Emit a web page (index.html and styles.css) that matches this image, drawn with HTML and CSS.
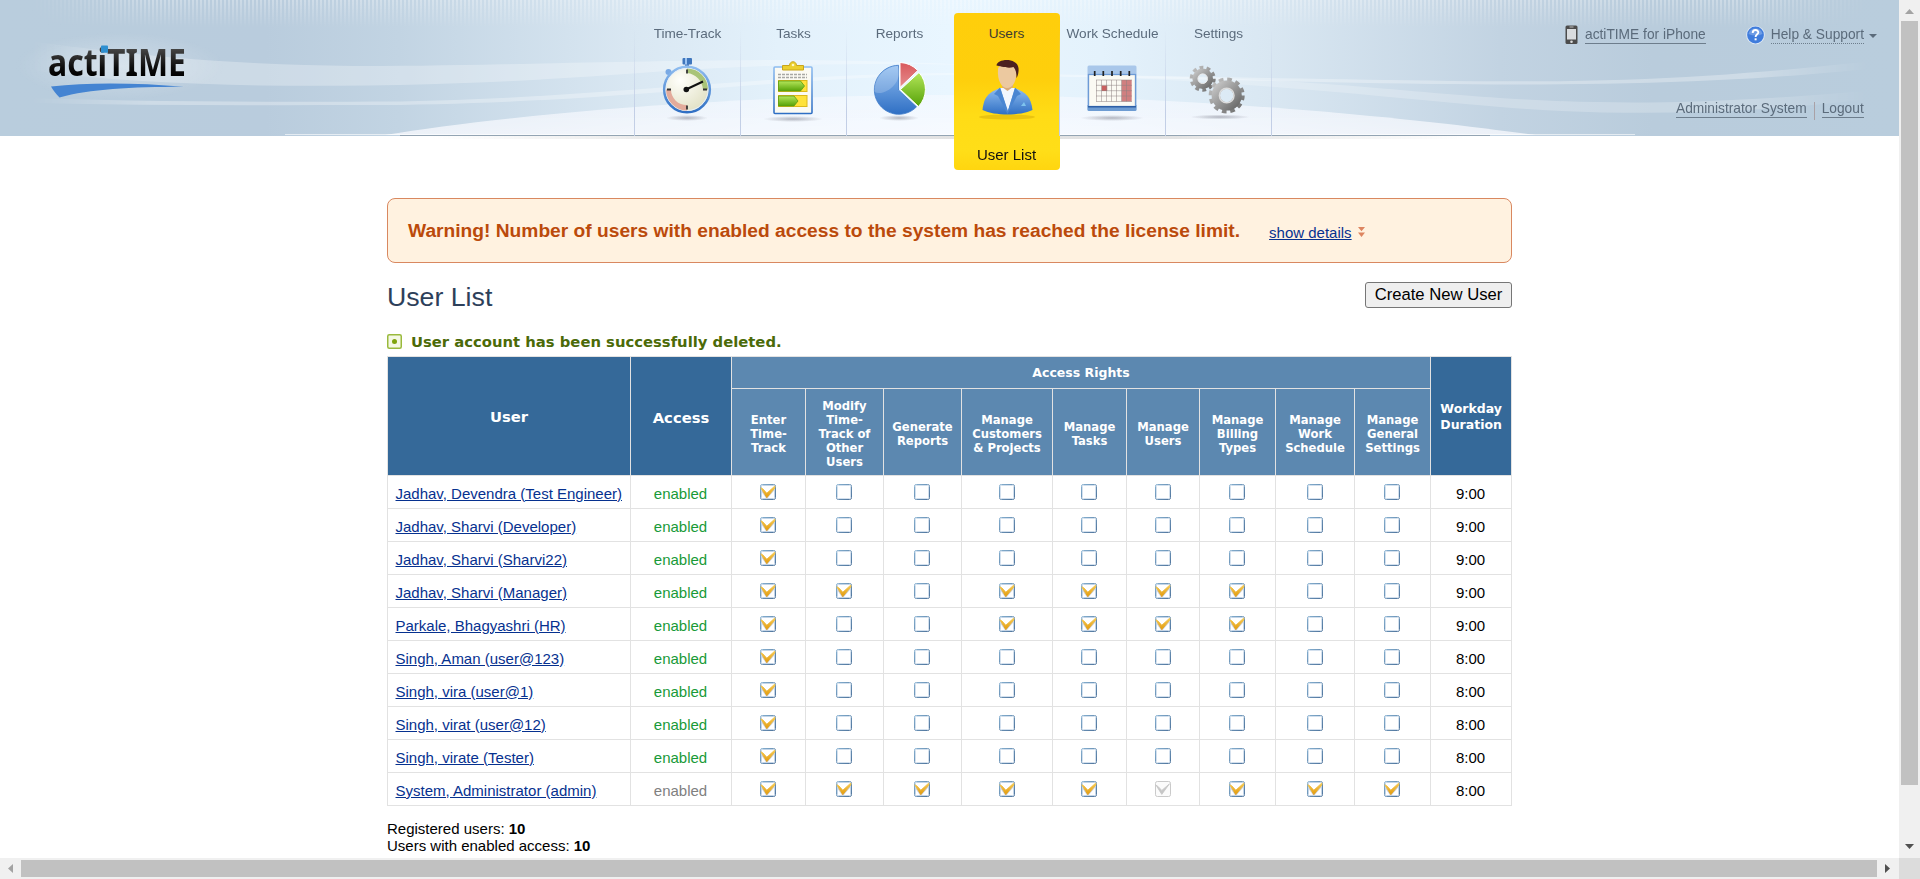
FILE: index.html
```html
<!DOCTYPE html>
<html lang="en">
<head>
<meta charset="utf-8">
<title>actiTIME - User List</title>
<link rel="stylesheet" href="styles.css">
</head>
<body>
<svg class="defs" aria-hidden="true">
  <defs>
    <linearGradient id="cbEdge" x1="0" y1="0" x2="1" y2="1"><stop offset="0" stop-color="#86b0d0"/><stop offset="1" stop-color="#4f749c"/></linearGradient>
    <linearGradient id="cbTick" x1="0" y1="0" x2="0" y2="1"><stop offset="0" stop-color="#f6cb55"/><stop offset="1" stop-color="#e29a0c"/></linearGradient>
    <linearGradient id="blue" x1="0" y1="0" x2="0" y2="1"><stop offset="0" stop-color="#8fbdf0"/><stop offset="1" stop-color="#2f6fc4"/></linearGradient>
    <linearGradient id="green" x1="0" y1="0" x2="0" y2="1"><stop offset="0" stop-color="#b4e65a"/><stop offset="1" stop-color="#56a208"/></linearGradient>
    <linearGradient id="red" x1="0" y1="0" x2="0" y2="1"><stop offset="0" stop-color="#d9585c"/><stop offset="1" stop-color="#e58e8e"/></linearGradient>
    <linearGradient id="steel" x1="0" y1="0" x2="1" y2="1"><stop offset="0" stop-color="#c4c4c4"/><stop offset="1" stop-color="#6c6c6c"/></linearGradient>
    <radialGradient id="face" cx=".35" cy=".3" r=".8"><stop offset="0" stop-color="#fffffb"/><stop offset="1" stop-color="#dfdec0"/></radialGradient>
    <radialGradient id="shade"><stop offset="0" stop-color="#556" stop-opacity=".4"/><stop offset="1" stop-color="#556" stop-opacity="0"/></radialGradient>
  </defs>
  <symbol id="cb-off" viewBox="0 0 16 16">
    <rect x=".5" y=".5" width="15" height="15" rx="1.8" fill="#fff" stroke="url(#cbEdge)"/>
    <rect x="1.5" y="1.5" width="13" height="13" rx=".8" fill="none" stroke="#d3e0ee"/>
  </symbol>
  <symbol id="cb-on" viewBox="0 0 16 16">
    <rect x=".5" y=".5" width="15" height="15" rx="1.8" fill="#fff" stroke="url(#cbEdge)"/>
    <rect x="1.5" y="1.5" width="13" height="13" rx=".8" fill="none" stroke="#c3d5e8"/>
    <path d="M2 7 L6.800 14 L14.500 5" fill="none" stroke="#cdd2dc" stroke-width="1.500"/>
    <path d="M.8 3.800 L3 5 L6.800 9.300 L14.800 2 L14.800 4 L6.800 13.600 Z" fill="url(#cbTick)" stroke="url(#cbTick)" stroke-width=".9"/>
  </symbol>
  <symbol id="cb-gray" viewBox="0 0 16 16">
    <rect x=".5" y=".5" width="15" height="15" rx="1.8" fill="#fbfbfb" stroke="#cacaca"/>
    <path d="M1 4.200 L3 5.400 L6.800 9.400 L14.500 2.800 L6.800 13.400 Z" fill="#c6c6c6" stroke="#c6c6c6" stroke-width=".8"/>
  </symbol>
</svg>

<div class="window">
  <div class="page">
    <header class="header">
      <svg class="header-art" viewBox="0 0 1899 140" width="1899" height="140" aria-hidden="true">
        <defs>
          <linearGradient id="sky" x1="0" x2="1" y1="0" y2="0">
            <stop offset="0" stop-color="#b9cddd"/><stop offset=".14" stop-color="#b9ccdd"/><stop offset=".21" stop-color="#c2d4e3"/>
            <stop offset=".33" stop-color="#d9e7f2"/><stop offset=".41" stop-color="#e3f1fb"/><stop offset=".5" stop-color="#e9f6ff"/><stop offset=".58" stop-color="#e4f2fc"/>
            <stop offset=".67" stop-color="#d9e7f2"/><stop offset=".79" stop-color="#c2d3e2"/><stop offset=".87" stop-color="#b9ccdc"/><stop offset="1" stop-color="#b9cddd"/>
          </linearGradient>
          <linearGradient id="edges" x1="0" x2="1" y1="0" y2="0">
            <stop offset=".015" stop-color="#fff" stop-opacity="0"/><stop offset=".08" stop-color="#fff" stop-opacity="1"/>
            <stop offset=".92" stop-color="#fff" stop-opacity="1"/><stop offset=".985" stop-color="#fff" stop-opacity="0"/>
          </linearGradient>
          <linearGradient id="hill" x1="0" x2="0" y1="0" y2="1"><stop offset="0" stop-color="#f6f9ff" stop-opacity=".6"/><stop offset="1" stop-color="#fbfbff" stop-opacity=".75"/></linearGradient>
          <linearGradient id="down" x1="0" x2="0" y1="0" y2="1"><stop offset="0" stop-color="#fff"/><stop offset="1" stop-color="#fff" stop-opacity="0"/></linearGradient>
          <linearGradient id="under" x1="0" x2="1" y1="0" y2="0"><stop offset="0" stop-color="#888" stop-opacity="0"/><stop offset=".3" stop-color="#888" stop-opacity=".4"/><stop offset=".7" stop-color="#888" stop-opacity=".4"/><stop offset="1" stop-color="#888" stop-opacity="0"/></linearGradient>
          <pattern id="bars" width="4" height="28" patternUnits="userSpaceOnUse"><rect width="2" height="28" fill="url(#down)" opacity=".3"/></pattern>
          <mask id="fade"><rect width="1899" height="140" fill="url(#edges)"/></mask>
          <radialGradient id="glow"><stop offset="0" stop-color="#fff" stop-opacity=".3"/><stop offset="1" stop-color="#fff" stop-opacity="0"/></radialGradient>
        </defs>
        <rect width="1899" height="136" fill="url(#sky)"/>
        <g mask="url(#fade)" fill="#fff">
          <rect width="1899" height="28" fill="url(#bars)"/>
          <path opacity=".28" d="M30 41 C140 56 240 66 380 66 C520 65 640 60 800 60 C900 61 950 64 1000 66 C880 62 760 64 640 73 C520 82 400 87 260 85.500 C180 84 100 80 30 70Z"/>
          <path opacity=".3" d="M30 98 C150 102 270 102 400 101.500 C600 98 760 74 950 73 C1150 75 1300 79 1430 80.500 C1620 84 1730 77 1899 58 L1899 66 C1750 82 1620 86 1430 84 C1260 81 1120 77 950 75 C770 78 620 102 400 105 C270 105 150 106 30 103Z"/>
          <path opacity=".22" d="M1060 76 C1280 74 1400 92 1500 98 C1640 107 1740 102 1899 88 L1899 95 C1760 115 1620 117 1500 107 C1380 97 1240 80 1060 76Z"/>
        </g>
        <path d="M385 135 C500 116 720 95 950 95 C1180 95 1400 116 1535 135Z" fill="url(#hill)"/>
        <ellipse cx="120" cy="66" rx="105" ry="34" fill="url(#glow)"/>
        <rect x="285" y="134" width="1350" height="1" fill="#fff" opacity=".6"/>
        <rect x="400" y="135" width="1090" height="1" fill="#93a4b3"/>
        <rect x="430" y="136" width="1040" height="3" fill="url(#under)" opacity=".6"/>
      </svg>

      <div class="brand">
        <svg class="logo" width="154" height="70" viewBox="40 30 154 70" role="img" aria-label="actiTIME">
          <defs>
            <linearGradient id="ink" gradientUnits="userSpaceOnUse" x1="0" y1="48" x2="0" y2="76"><stop offset="0" stop-color="#484848"/><stop offset=".7" stop-color="#0c0c0c"/><stop offset="1" stop-color="#000"/></linearGradient>
          </defs>
          <text class="logo-text" x="48" y="75.500" textLength="138" lengthAdjust="spacingAndGlyphs" fill="url(#ink)">actiTIME</text>
          <rect x="101" y="45.500" width="7" height="7.300" rx=".8" fill="#2f8fd0"/>
          <path d="M51 86.500 C90 82 140 83 184 86.800 C130 87 90 89 59.500 97.500 C56 94 53 90 51 86.500Z" fill="#4484d2"/>
        </svg>
      </div>

      <nav class="nav">
        <a class="tab"><span class="tab-label">Time-Track</span>
          <svg class="tab-icon" viewBox="0 0 106 84">
            <ellipse cx="53" cy="73" rx="21" ry="3" fill="url(#shade)"/>
            <path d="M36 29 L40 33" stroke="#5c8fd6" stroke-width="2"/><circle cx="34.500" cy="27" r="3" fill="#79a9e4"/>
            <rect x="51" y="17" width="4" height="6" fill="#5c85c0"/><rect x="48.500" y="13" width="9.500" height="6.500" rx="1" fill="#3f76bd"/><rect x="51" y="13" width="2" height="6.500" fill="#9cc4f2"/>
            <circle cx="53" cy="44.500" r="22.800" fill="url(#face)" stroke="url(#blue)" stroke-width="2.600"/>
            <circle cx="53" cy="44.500" r="21" fill="none" stroke="#e6effa" stroke-width="1"/>
            <path d="M53 23.500 A21 21 0 0 1 74 44.500 L69 44.500 A18 18 0 0 0 53 28Z" fill="#a9c478"/>
            <path d="M32 44.500 A21 21 0 0 0 53 65.500 L53 60 A15.500 15.500 0 0 1 37 44.500Z" fill="#e3ab9b"/>
            <path d="M53 24.500V28.500M53 60.500V64.500M33 44.500H37M69 44.500H73" stroke="#333" stroke-width="1.800"/>
            <path d="M52 44.500 L69 36.500" stroke="#111" stroke-width="2"/><circle cx="52.300" cy="44.500" r="2.800" fill="#111"/>
          </svg></a>
        <a class="tab"><span class="tab-label">Tasks</span>
          <svg class="tab-icon" viewBox="0 0 106 84">
            <ellipse cx="53" cy="74" rx="30" ry="3" fill="url(#shade)"/>
            <rect x="34" y="22" width="38" height="46.500" rx="1" fill="#fbfaf3" stroke="url(#blue)" stroke-width="1.600"/>
            <path d="M38 29.500H67M38 32.500H67" stroke="#a8a8a4" stroke-width="1.400" stroke-dasharray="3 1"/>
            <path d="M42.500 25 V20.500 H49.500 C49.500 15.500 56.500 15.500 56.500 20.500 H63.500 V25Z" fill="#ecd02f" stroke="#c9a51a"/><circle cx="53" cy="20" r="1.300" fill="#fff8c0"/>
            <rect x="38.500" y="35.500" width="28.500" height="11" fill="#ffe23a" stroke="#dcb81a"/><rect x="38.500" y="50.500" width="28.500" height="11" fill="#ffe23a" stroke="#dcb81a"/>
            <path d="M38.500 36H60.500L64.500 41L60.500 46H38.500Z" fill="url(#green)" stroke="#5a9c12" stroke-width=".8"/>
            <path d="M38.500 51H54L58 56L54 61H38.500Z" fill="url(#green)" stroke="#5a9c12" stroke-width=".8"/>
          </svg></a>
        <a class="tab"><span class="tab-label">Reports</span>
          <svg class="tab-icon" viewBox="0 0 106 84">
            <ellipse cx="53" cy="73" rx="20" ry="3" fill="url(#shade)"/>
            <path d="M52.500 45 V20.300 A24.500 24.500 0 1 0 70.500 61.800Z" fill="url(#blue)" stroke="#3d7ac8" stroke-width=".8"/>
            <path d="M28.500 47 C38 52 58 38 52 21 A24 24 0 0 0 28.500 47Z" fill="#fff" opacity=".2"/>
            <path d="M54 42.500 V17.500 A26 26 0 0 1 71.800 25.500Z" fill="url(#red)" stroke="#fff" stroke-width="1"/>
            <path d="M54.500 44.500 L73 27.500 A25 25 0 0 1 72.500 61.500Z" fill="url(#green)" stroke="#fff" stroke-width="1"/>
          </svg></a>
        <a class="tab tab-active"><span class="tab-label">Users</span>
          <svg class="tab-icon" viewBox="0 0 106 84">
            <ellipse cx="53" cy="72" rx="28" ry="2.500" fill="#b88a00" opacity=".3"/>
            <path d="M28.500 65 C30 51 35 47.500 46 43 L61 43 C72 47.500 77 52 78.500 65 C66 71 41 71 28.500 65Z" fill="url(#blue)"/>
            <path d="M46.500 43 L53.500 67 L61 43Z" fill="#f3f7fd"/>
            <path d="M46 42.500 L40 49 L44 51 L53.500 69 L63 51 L67 49 L61 42.500 L54 66Z" fill="#4a86d2"/>
            <path d="M67 61 L70 57 L72 61Z" fill="#7ec3ee"/>
            <path d="M48 36 H59 V42 L53.500 46 L48 42Z" fill="#d9ab7c"/>
            <path d="M44 24 C43 36 48 43 53 43 C59 43 63 36 62.500 24 C62 17 45 17 44 24Z" fill="#ecc9a0"/>
            <path d="M42.500 20.500 C43 13.500 63 12 64.500 23 C65 27 63.500 32 62.500 33 C62.500 28 62 25 59.500 22 C54 24 46 21 42.500 20.500Z" fill="#4b2020"/>
          </svg>
          <span class="subtab">User List</span></a>
        <a class="tab"><span class="tab-label">Work Schedule</span>
          <svg class="tab-icon" viewBox="0 0 106 84">
            <ellipse cx="53" cy="73" rx="32" ry="3" fill="url(#shade)"/>
            <rect x="28.500" y="20.500" width="49" height="45" rx="1.500" fill="#a9c7ea"/>
            <path d="M28.500 60H77.500V65Q77.500 66 76 66H30Q28.500 66 28.500 65Z" fill="#6e9cd2"/>
            <rect x="29.500" y="29.500" width="47" height="32" fill="#fbfaf3" stroke="#6d9bd6" stroke-width="1.300"/>
            <path d="M29 61.700H77" stroke="#2d5fa6" stroke-width="1.600"/>
            <rect x="62.700" y="35" width="10" height="21.500" fill="#d07f80"/><rect x="42.700" y="40.500" width="5.500" height="5.500" fill="#c9605f"/>
            <path d="M37 35H73M37 40.300H73M37 45.700H73M37 51H73M37 56.500H73M37.500 35V56.500M42.500 35V56.500M47.500 35V56.500M52.500 35V56.500M57.500 35V56.500M62.500 35V56.500M67.500 35V56.500" stroke="#8d8080" stroke-width=".5"/>
            <path d="M35.700 26V31M44.300 26V31M53 26V31M61.700 26V31M70.300 26V31" stroke="#222" stroke-width="1.700"/>
          </svg></a>
        <a class="tab"><span class="tab-label">Settings</span>
          <svg class="tab-icon" viewBox="0 0 106 84">
            <ellipse cx="55" cy="72" rx="30" ry="2.500" fill="url(#shade)"/>
            <g fill="none" stroke="url(#steel)">
              <circle cx="37.700" cy="33.700" r="11.200" stroke-width="3.600" stroke-dasharray="3.800 3.240"/><circle cx="37.700" cy="33.700" r="7.600" stroke-width="5.400"/>
              <circle cx="61.700" cy="50.500" r="16" stroke-width="4" stroke-dasharray="4.600 3.780"/><circle cx="61.700" cy="50.500" r="10.900" stroke-width="8.400"/>
            </g>
            <circle cx="37.700" cy="33.700" r="4.800" fill="none" stroke="#e8e8e8" stroke-width="1"/><circle cx="61.700" cy="50.500" r="7.300" fill="none" stroke="#dcdcdc" stroke-width="1.500"/>
          </svg></a>
      </nav>

      <div class="tools">
        <div class="tools-row">
          <svg width="13" height="20" viewBox="0 0 13 20"><rect x=".5" y=".5" width="12" height="18.500" rx="1.500" fill="#4c4c4c"/><rect x="2" y="4" width="9" height="10.500" fill="#d9dcdf"/><rect x="4.500" y="1.500" width="4" height="1" fill="#bbb"/><circle cx="6.500" cy="16.800" r="1.300" fill="#ddd"/></svg>
          <a class="tool-link iphone">actiTIME for iPhone</a>
          <svg width="19" height="20" viewBox="0 0 19 20"><circle cx="9.500" cy="10" r="9.300" fill="#dde8f5"/><circle cx="9.500" cy="10" r="8.400" fill="#3f7cdc"/><path d="M2.500 9 A7.200 7.200 0 0 1 16.500 9 Q9.500 12 2.500 9Z" fill="#fff" opacity=".25"/><path d="M6.700 8 C6.700 4 12.500 4.300 12.300 7.500 C12.200 9.300 9.600 9.500 9.600 12" fill="none" stroke="#fff" stroke-width="1.900"/><rect x="8.600" y="13.300" width="2" height="2" fill="#fff"/></svg>
          <a class="tool-link help">Help &amp; Support</a>
          <span class="caret"></span>
        </div>
        <div class="tools-row account">
          <a class="tool-link">Administrator System</a><span class="bar"></span><a class="tool-link">Logout</a>
        </div>
      </div>
    </header>

    <main class="content">
      <section class="warning">
        <strong class="warning-text">Warning! Number of users with enabled access to the system has reached the license limit.</strong>
        <a class="details">show details</a>
        <svg class="arrows" width="7" height="10" viewBox="0 0 7 10"><path d="M0 0H7L3.500 4.300ZM0 5.500H7L3.500 10Z" fill="#dd8560"/></svg>
      </section>
      <div class="title-row">
        <h1 class="title">User List</h1>
        <button class="create">Create New User</button>
      </div>
      <div class="message">
        <svg width="15" height="15" viewBox="0 0 15 15"><rect x=".75" y=".75" width="13.500" height="13.500" rx="1.500" fill="#f4f8e4" stroke="#9aba3c" stroke-width="1.500"/><circle cx="7.500" cy="7.500" r="2.500" fill="#7fa30c"/></svg>
        <span>User account has been successfully deleted.</span>
      </div>
      <table class="users">
        <colgroup><col class="c1"><col class="c2"><col class="c3"><col class="c4"><col class="c5"><col class="c6"><col class="c7"><col class="c8"><col class="c9"><col class="c10"><col class="c11"><col class="c12"></colgroup>
        <thead>
          <tr class="group-row"><th rowspan="2" class="dark big">User</th><th rowspan="2" class="dark big access">Access</th><th colspan="9" class="group">Access Rights</th><th rowspan="2" class="dark group">Workday<br>Duration</th></tr>
          <tr class="right-row"><th>Enter<br>Time-<br>Track</th><th>Modify<br>Time-<br>Track of<br>Other<br>Users</th><th>Generate<br>Reports</th><th>Manage<br>Customers<br>&amp; Projects</th><th>Manage<br>Tasks</th><th>Manage<br>Users</th><th>Manage<br>Billing<br>Types</th><th>Manage<br>Work<br>Schedule</th><th>Manage<br>General<br>Settings</th></tr>
        </thead>
        <tbody id="rows"></tbody>
      </table>
      <p class="totals">Registered users: <b>10</b><br>Users with enabled access: <b>10</b></p>
    </main>
  </div>

  <div class="vbar"><svg width="21" height="21" viewBox="0 0 21 21"><path d="M6 14H15L10.500 9Z" fill="#a3a3a3"/></svg><div class="vthumb"></div><svg width="21" height="21" viewBox="0 0 21 21"><path d="M6 7H15L10.500 12Z" fill="#505050"/></svg></div>
  <div class="hbar"><svg width="21" height="21" viewBox="0 0 21 21"><path d="M13 6V15L8 10.500Z" fill="#a3a3a3"/></svg><div class="hthumb"></div><svg width="21" height="21" viewBox="0 0 21 21"><path d="M8 6V15L13 10.500Z" fill="#505050"/></svg></div>
  <div class="corner"></div>
</div>
<script src="app.js"></script>
</body>
</html>
```
FILE: styles.css
```css
* { box-sizing: border-box; }
body { margin: 0; overflow: hidden; background: #fff; color: #000; font: 15px "Liberation Sans", Arial, sans-serif; }
svg { display: block; flex: none; }
.defs { position: absolute; width: 0; height: 0; }

.window { display: grid; grid-template: 858px 21px / 1899px 21px; height: 879px; width: 1920px; }
.page { overflow: hidden; }

/* header */
.header { position: relative; z-index: 0; display: grid; grid-template-columns: 634px 638px 1fr; height: 136px; }
.header-art { position: absolute; left: 0; top: 0; z-index: -1; }
.brand { padding: 30px 0 0 40px; }
.logo-text { font: bold 37px "Noto Sans", sans-serif; }

.nav { display: grid; grid-template-columns: 106px 106px 106px 107px 106px 107px; height: 136px; }
.tab { display: flex; flex-direction: column; align-items: center; height: 136px; padding-top: 26px; color: #5b6b7c; border-left: 1px solid; border-image: linear-gradient(rgba(190,205,230,0) 30px, #c3cfe6 110px) 1; }
.tab:last-child { border-right: 1px solid; }
.tab-label { font-size: 13.600px; line-height: 16px; height: 19px; white-space: nowrap; }
.tab-icon { width: 106px; height: 84px; margin: 0 0 0 -1px; }
.tab-active { margin: 13px 0 0 2px; width: 106px; height: 157px; padding-top: 13px; border: 0; border-radius: 4px; background: linear-gradient(#ffce0b, #fecf0c 42%, #ffdc16 65%, #ffde18 88%, #ffd50f); color: #3b3b32; }
.tab-active .tab-label { margin-left: -1px; }
.subtab { margin: 17px 0 0 -1px; line-height: 17px; color: #111; font-size: 15px; }

.tools { padding-right: 24px; }
.tools-row { display: flex; align-items: center; padding: 25px 0 0 293px; height: 44px; color: #5b6b7b; font-size: 13.750px; }
.tool-link { line-height: 16px; border-bottom: 1px solid #6d7d8c; white-space: nowrap; }
.iphone { margin: 1px 40px 0 7px; }
.help { margin: 1px 0 0 6px; border-bottom-style: dotted; }
.caret { margin: 3px 0 0 5px; border: 4px solid transparent; border-top-color: #5b6b7b; border-bottom: 0; }
.account { padding: 0 0 0 404px; margin-top: 57px; height: 18px; align-items: flex-start; }
.bar { width: 1px; height: 18px; margin: 1px 7px 0 7px; background: #a9a1a6; }

/* content */
.content { width: 1125px; margin: 62px 0 0 387px; }
.warning { display: flex; align-items: center; height: 65px; padding-left: 20px; border: 1px solid #d98860; border-radius: 8px; background: #fff2e0; }
.warning-text { color: #bb4a0b; font-size: 19.200px; line-height: 22px; white-space: nowrap; }
.details { margin: 3px 6px 0 29px; color: #06318f; text-decoration: underline; }
.arrows { margin-top: 3px; }
.title-row { display: flex; justify-content: space-between; height: 59px; padding-top: 19px; }
.title { margin: 0; color: #2d405a; font-size: 26.700px; font-weight: 400; line-height: 30px; }
.create { width: 147px; height: 26px; padding: 0; border: 1px solid #767676; border-radius: 3px; background: #efefef; color: #000; font: 16.670px "Liberation Sans", Arial, sans-serif; }
.message { display: flex; align-items: center; gap: 9px; height: 34px; padding-top: 4px; color: #4b6a08; font: bold 14.800px "DejaVu Sans", Verdana, sans-serif; white-space: nowrap; }

.users { table-layout: fixed; width: 1125px; border-collapse: separate; border-spacing: 0; border: solid #e2e2e2; border-width: 1px 0 0 1px; }
.users th, .users td { padding: 0; border: solid #e2e2e2; border-width: 0 1px 1px 0; }
.c1 { width: 243px; } .c2 { width: 101px; } .c3 { width: 74px; } .c4 { width: 78px; } .c5 { width: 78px; } .c6 { width: 91px; }
.c7 { width: 74px; } .c8 { width: 73px; } .c9 { width: 76px; } .c10 { width: 79px; } .c11 { width: 76px; } .c12 { width: 81px; }
.users th { padding-top: 3px; background: #5c88b0; color: #fff; font: bold 11.600px/14px "DejaVu Sans", Verdana, sans-serif; }
.users th.dark { background: #356999; }
.users th.big { padding-top: 2px; font-size: 14.800px; line-height: 18px; }
.users th.access { padding-top: 4px; }
.users th.group { padding-top: 1px; font-size: 12.500px; line-height: 16px; }
.users th.dark.group { padding-top: 2px; }
.group-row { height: 32px; }
.right-row { height: 87px; }
.users td { height: 33px; text-align: center; line-height: 17px; padding: 2px 1px 0 0; }
.users td.name { text-align: left; padding: 2px 0 0 7.500px; color: #06318f; text-decoration: underline; white-space: nowrap; }
.users td.on { color: #189a38; }
.users td.locked { color: #808080; }
.users td.right { padding: 0 1px 0 0; }
.cb { width: 16px; height: 16px; margin: 0 auto; }
.totals { margin: 14px 0 0; line-height: 17px; }

/* scrollbars */
.vbar, .hbar { display: flex; background: #f0f0f0; }
.vbar { flex-direction: column; }
.vthumb { width: 17px; height: 764px; margin: 0 2px 52px; background: #c1c1c1; }
.hthumb { width: 1856px; height: 17px; margin: 2px 0; background: #c1c1c1; }
.corner { background: #dcdcdc; }
```
FILE: app.js
```js
// Each mask digit is one access right: 1 granted, 0 not granted, x granted but locked.
const users = [
  ["Jadhav, Devendra (Test Engineer)", "100000000", "9:00"],
  ["Jadhav, Sharvi (Developer)", "100000000", "9:00"],
  ["Jadhav, Sharvi (Sharvi22)", "100000000", "9:00"],
  ["Jadhav, Sharvi (Manager)", "110111100", "9:00"],
  ["Parkale, Bhagyashri (HR)", "100111100", "9:00"],
  ["Singh, Aman (user@123)", "100000000", "8:00"],
  ["Singh, vira (user@1)", "100000000", "8:00"],
  ["Singh, virat (user@12)", "100000000", "8:00"],
  ["Singh, virate (Tester)", "100000000", "8:00"],
  ["System, Administrator (admin)", "11111x111", "8:00"]
];
const kinds = { "0": "cb-off", "1": "cb-on", x: "cb-gray" };

document.getElementById("rows").innerHTML = users.map(([name, mask, hours]) => {
  const rights = [...mask].map(m => `<td class="right"><svg class="cb"><use href="#${kinds[m]}"/></svg></td>`).join("");
  const access = mask.includes("x") ? "locked" : "on";
  return `<tr><td class="name">${name}</td><td class="${access}">enabled</td>${rights}<td>${hours}</td></tr>`;
}).join("");
```
